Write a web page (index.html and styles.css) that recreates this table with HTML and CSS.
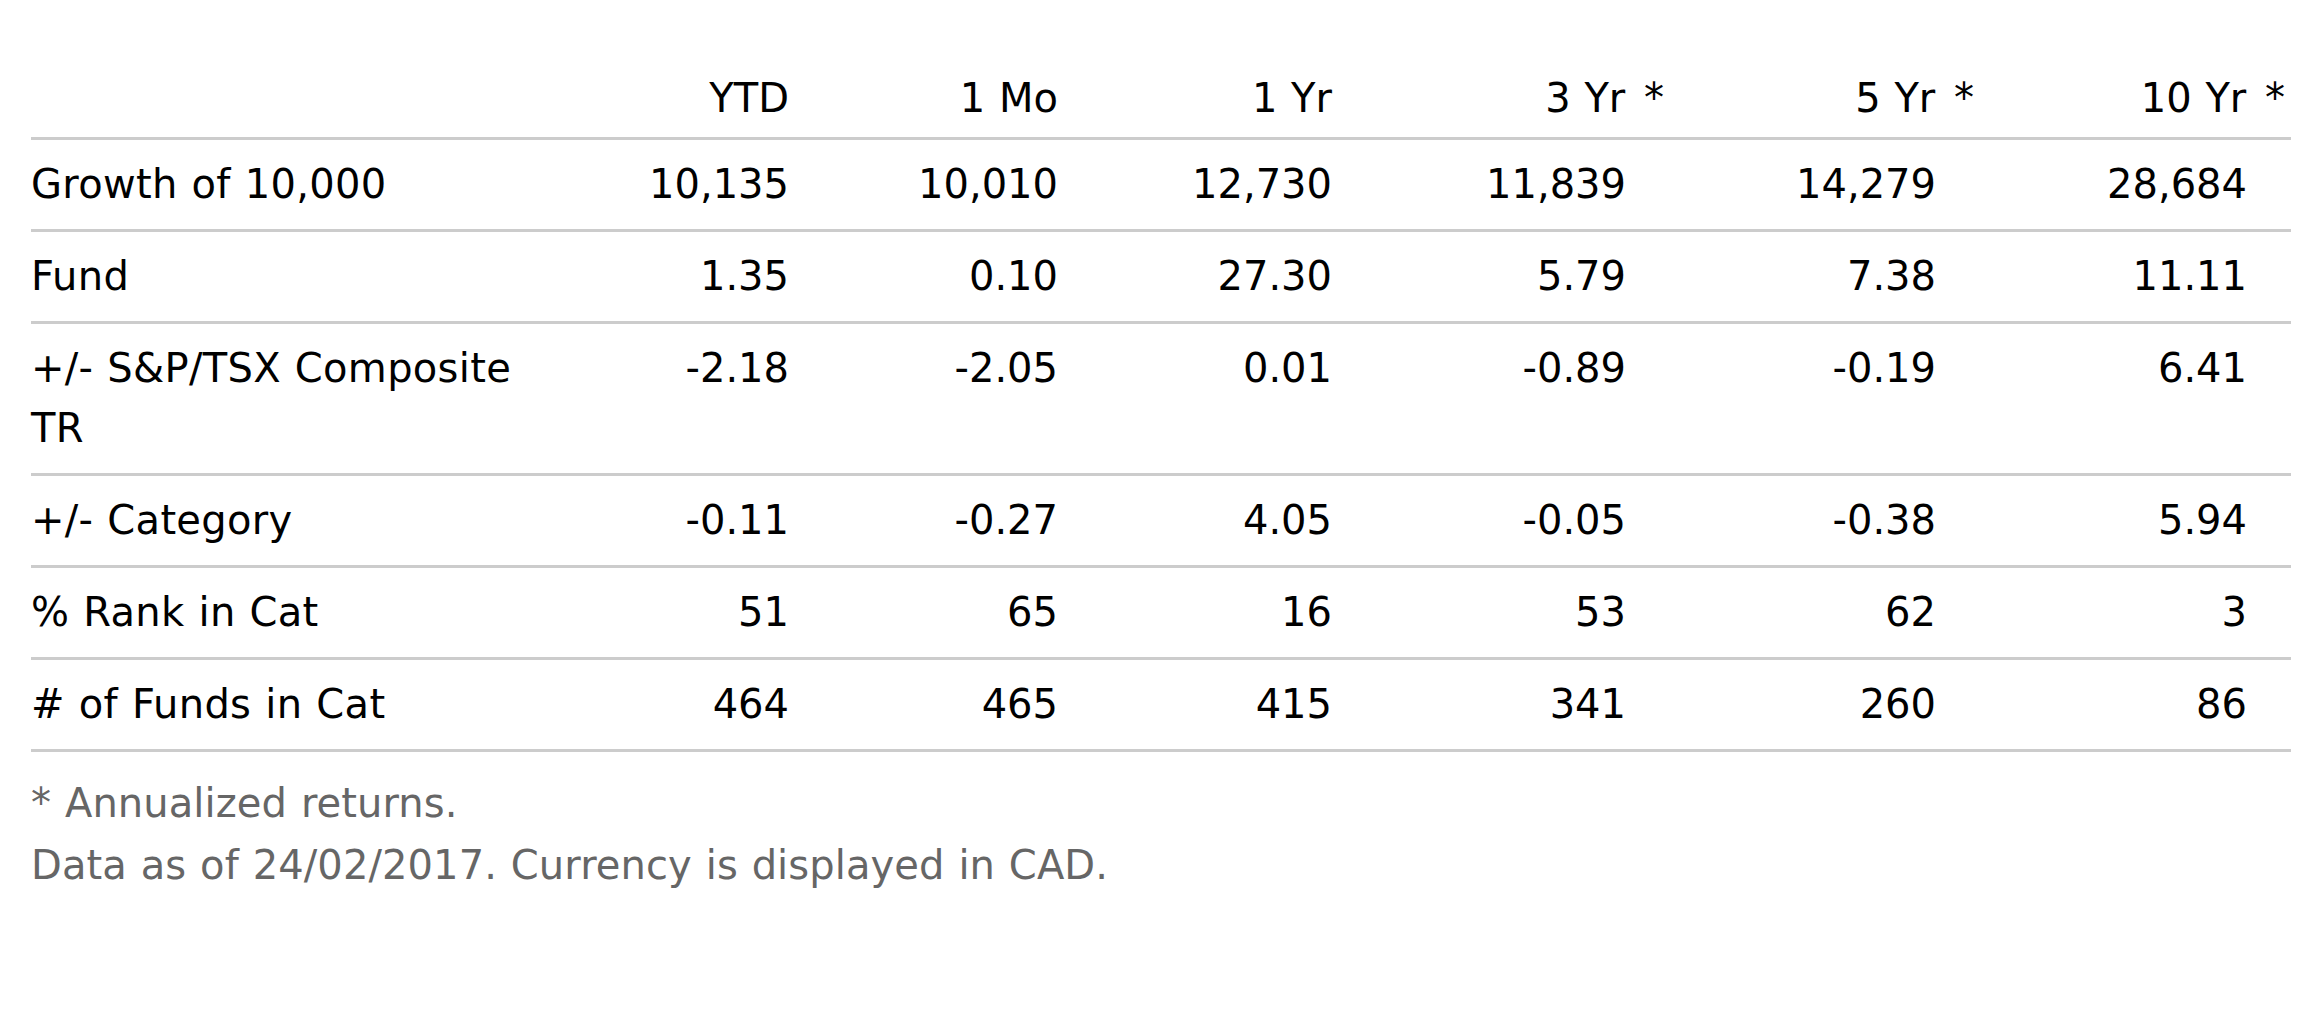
FILE: index.html
```html
<!DOCTYPE html>
<html lang="en">
<head>
<meta charset="utf-8">
<title>Trailing Returns</title>
<link rel="stylesheet" href="styles.css">
</head>
<body>
<div class="perf">
  <table class="perf-table">
    <colgroup>
      <col class="c-label">
      <col class="c-ytd">
      <col class="c-1mo">
      <col class="c-1yr">
      <col class="c-3yr">
      <col class="c-5yr">
      <col class="c-10yr">
    </colgroup>
    <thead>
      <tr>
        <th class="label"></th>
        <th>YTD</th>
        <th>1 Mo</th>
        <th>1 Yr</th>
        <th>3 Yr<span class="ast"> *</span></th>
        <th>5 Yr<span class="ast"> *</span></th>
        <th>10 Yr<span class="ast"> *</span></th>
      </tr>
    </thead>
    <tbody>
      <tr>
        <td class="label">Growth of 10,000</td>
        <td>10,135</td><td>10,010</td><td>12,730</td><td>11,839</td><td>14,279</td><td>28,684</td>
      </tr>
      <tr>
        <td class="label">Fund</td>
        <td>1.35</td><td>0.10</td><td>27.30</td><td>5.79</td><td>7.38</td><td>11.11</td>
      </tr>
      <tr>
        <td class="label">+/- S&amp;P/TSX Composite TR</td>
        <td>-2.18</td><td>-2.05</td><td>0.01</td><td>-0.89</td><td>-0.19</td><td>6.41</td>
      </tr>
      <tr>
        <td class="label">+/- Category</td>
        <td>-0.11</td><td>-0.27</td><td>4.05</td><td>-0.05</td><td>-0.38</td><td>5.94</td>
      </tr>
      <tr>
        <td class="label">% Rank in Cat</td>
        <td>51</td><td>65</td><td>16</td><td>53</td><td>62</td><td>3</td>
      </tr>
      <tr>
        <td class="label"># of Funds in Cat</td>
        <td>464</td><td>465</td><td>415</td><td>341</td><td>260</td><td>86</td>
      </tr>
    </tbody>
  </table>
  <div class="notes">
    <p class="note">* Annualized returns.</p>
    <p class="note">Data as of 24/02/2017. Currency is displayed in CAD.</p>
  </div>
</div>
</body>
</html>
```
FILE: styles.css
```css
html, body {
  margin: 0;
  padding: 0;
  background: #ffffff;
}

body {
  font-family: "DejaVu Sans", Verdana, sans-serif;
  font-size: 40px;
  line-height: 60px;
  color: #000000;
  word-spacing: 1px;
}

.perf {
  padding: 54px 19px 0 31px;
}

.perf-table {
  width: 2260px;
  table-layout: fixed;
  border-collapse: separate;
  border-spacing: 0;
}

.c-label { width: 520px; }
.c-ytd   { width: 282px; }
.c-1mo   { width: 269px; }
.c-1yr   { width: 274px; }
.c-3yr   { width: 294px; }
.c-5yr   { width: 310px; }
.c-10yr  { width: 311px; }

.perf-table th,
.perf-table td {
  text-align: right;
  vertical-align: top;
  font-weight: normal;
  border-bottom: 3px solid #cccccc;
  padding: 14px 44px 15px 0;
}

.perf-table th {
  padding-bottom: 9px;
  white-space: nowrap;
}

.perf-table .label {
  text-align: left;
  padding-right: 0;
  letter-spacing: 0.3px;
}

.ast {
  padding-left: 5px;
  margin-right: -38px;
}

.notes {
  margin-top: 20px;
  color: #666666;
  line-height: 62px;
  letter-spacing: 0.1px;
}

.note {
  margin: 0;
}
```
